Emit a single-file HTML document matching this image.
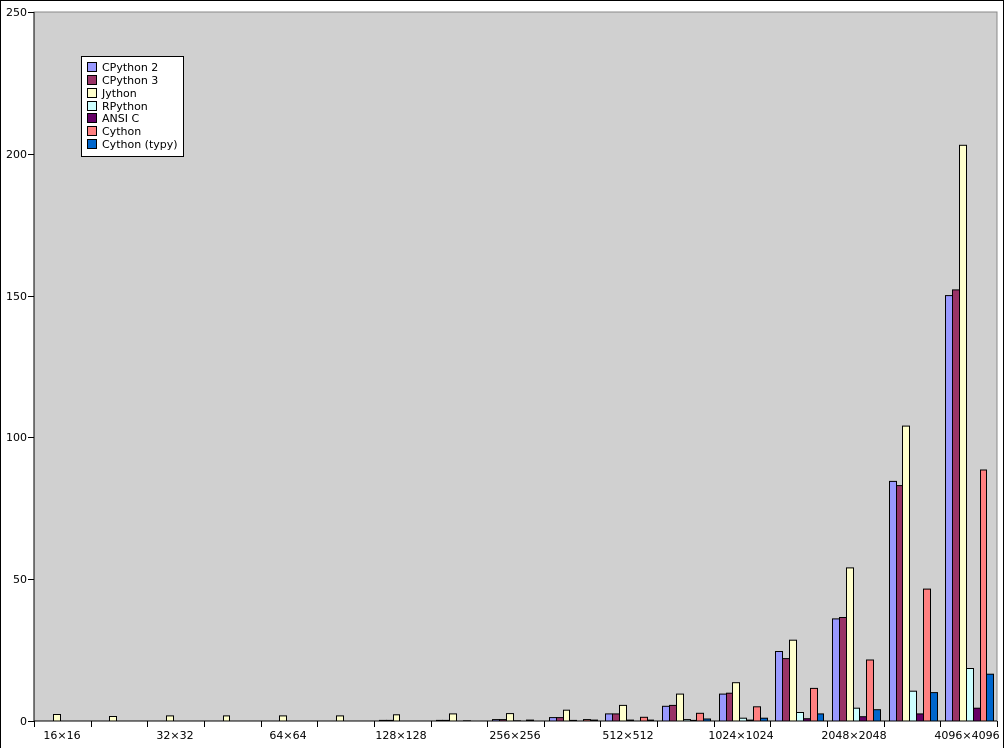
<!DOCTYPE html>
<html><head><meta charset="utf-8"><style>
html,body{margin:0;padding:0;background:#fff}
svg{display:block}
text{font-family:"DejaVu Sans","Liberation Sans",sans-serif;font-size:11px;fill:#000}
</style></head><body>
<svg id="s" width="1005" height="748" xmlns="http://www.w3.org/2000/svg">
<rect x="0.5" y="0.5" width="1003" height="760" fill="#fff" stroke="#000"/>
<rect x="34" y="12" width="963" height="709" fill="#d0d0d0" stroke="#888" stroke-width="1"/>
<g id="bars"></g>
<line x1="34" y1="12" x2="34" y2="721" stroke="#000"/>
<line x1="34" y1="721" x2="997" y2="721" stroke="#000"/>
<g stroke="#000">
<line x1="28" y1="12.5" x2="34" y2="12.5"/><line x1="28" y1="154.5" x2="34" y2="154.5"/><line x1="28" y1="296.5" x2="34" y2="296.5"/><line x1="28" y1="437.5" x2="34" y2="437.5"/><line x1="28" y1="579.5" x2="34" y2="579.5"/><line x1="28" y1="721.5" x2="34" y2="721.5"/>
</g>
<g id="ticks" stroke="#000"></g>
<g text-anchor="end">
<text x="27" y="16">250</text><text x="27" y="158">200</text><text x="27" y="300">150</text><text x="27" y="441">100</text><text x="27" y="583">50</text><text x="27" y="725">0</text>
</g>
<g text-anchor="middle">
<text x="62" y="739">16×16</text><text x="175" y="739">32×32</text><text x="288" y="739">64×64</text><text x="401" y="739">128×128</text><text x="515" y="739">256×256</text><text x="628" y="739">512×512</text><text x="741" y="739">1024×1024</text><text x="854" y="739">2048×2048</text><text x="967" y="739">4096×4096</text>
</g>
<rect x="81.5" y="56.5" width="102" height="100" fill="#fff" stroke="#000"/>
<g stroke="#000">
<rect x="87.5" y="62.5" width="9" height="9" fill="#9999ff"/>
<rect x="87.5" y="75.5" width="9" height="9" fill="#993366"/>
<rect x="87.5" y="88.5" width="9" height="9" fill="#ffffcc"/>
<rect x="87.5" y="101.5" width="9" height="9" fill="#ccffff"/>
<rect x="87.5" y="113.5" width="9" height="9" fill="#660066"/>
<rect x="87.5" y="126.5" width="9" height="9" fill="#ff8080"/>
<rect x="87.5" y="139.5" width="9" height="9" fill="#0066cc"/>
</g>
<text x="102" y="71">CPython 2</text>
<text x="102" y="84">CPython 3</text>
<text x="102" y="97">Jython</text>
<text x="102" y="110">RPython</text>
<text x="102" y="122">ANSI C</text>
<text x="102" y="135">Cython</text>
<text x="102" y="148">Cython (typy)</text>
</svg>
<script>
var cols=["#9999ff","#993366","#ffffcc","#ccffff","#660066","#ff8080","#0066cc"];
var d=[[0,0,2.3,0,0,0,0],[0,0,1.6,0,0,0,0],[0,0,1.8,0,0,0,0],[0,0,1.8,0,0,0,0],[0,0,1.8,0,0,0,0],[0,0,1.8,0,0,0,0],
[0.2,0.2,2.2,0,0,0,0],[0.2,0.2,2.5,0,0.1,0,0],[0.5,0.5,2.6,0.1,0,0.3,0],[1.2,1.2,3.8,0.2,0,0.5,0.3],
[2.5,2.5,5.5,0.3,0,1.3,0.3],[5.2,5.5,9.5,0.5,0.2,2.7,0.7],[9.5,9.8,13.5,1,0.3,5,1],[24.5,22,28.5,3,0.8,11.5,2.5],
[36,36.5,54,4.5,1.5,21.5,4],[84.5,83,104,10.5,2.5,46.5,10],[150,152,203,18.5,4.5,88.5,16.5]];
var g=document.getElementById('bars'),t=document.getElementById('ticks'),h='',tk='';
var W=(997-34)/17;
for(var i=0;i<17;i++){var x0=34+i*W;
 tk+='<line x1="'+(Math.round(x0+W)+0.5)+'" y1="721" x2="'+(Math.round(x0+W)+0.5)+'" y2="727"/>';
 if(i==0) tk+='<line x1="34.5" y1="721" x2="34.5" y2="727"/>';
 for(var j=0;j<7;j++){var v=d[i][j];if(v<=0)continue;var hh=v*2.836;
 var x=Math.round(x0+5+j*6.85)+0.5,w=Math.round(x0+5+(j+1)*6.85)-Math.round(x0+5+j*6.85);
 h+='<rect x="'+x+'" y="'+(721-hh).toFixed(1)+'" width="'+w+'" height="'+hh.toFixed(1)+'" fill="'+cols[j]+'" stroke="#000"/>';}}
g.innerHTML=h;t.innerHTML=tk;
</script>
</body></html>
